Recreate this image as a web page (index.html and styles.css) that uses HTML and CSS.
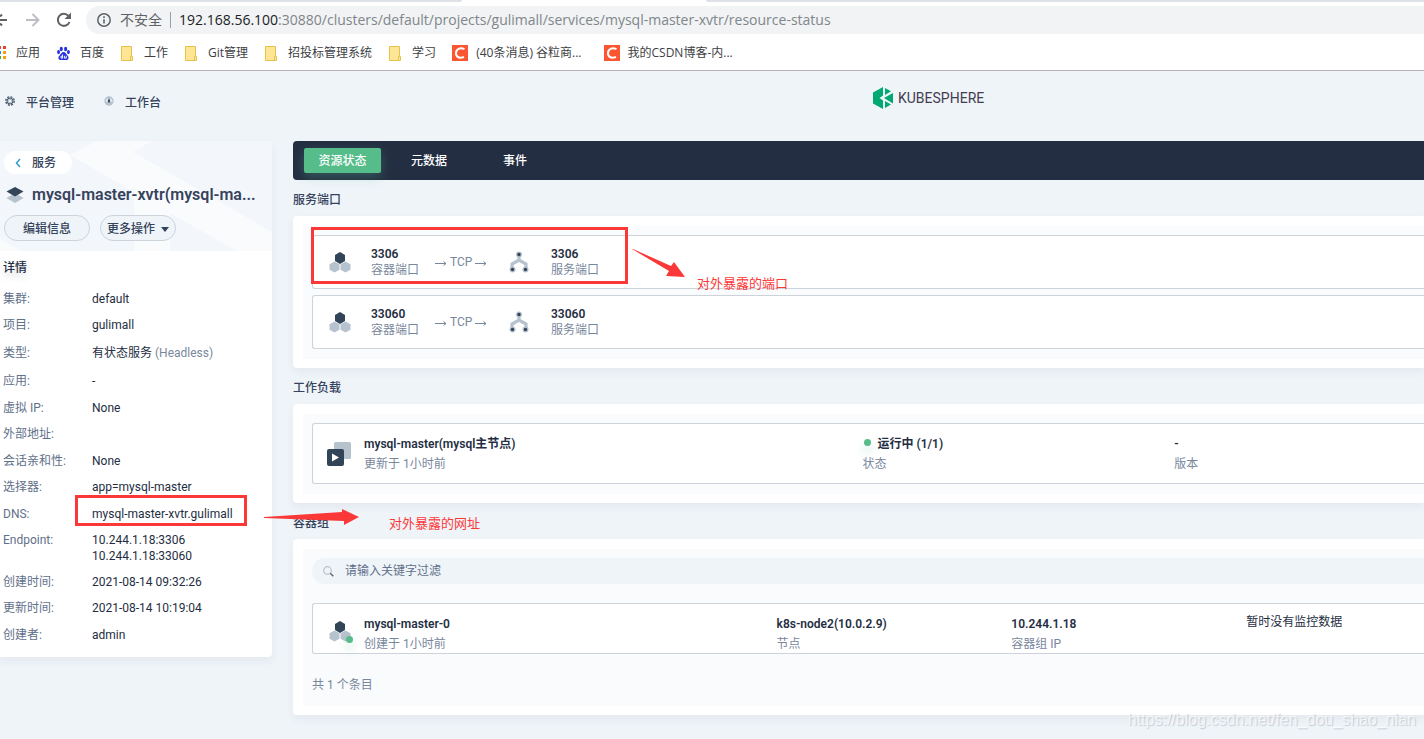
FILE: index.html
```html
<!DOCTYPE html>
<html lang="zh-CN">
<head>
<meta charset="utf-8">
<title>mysql-master-xvtr</title>
<link rel="stylesheet" href="styles.css">
</head>
<body>
<svg class="sprite" aria-hidden="true">
  <symbol id="pods" viewBox="0 0 22 22">
    <path fill="#324558" d="M11 1l5 3v6l-5 3-5-3V4z"/>
    <path fill="#b6c2cd" d="M5.500 10.500l5 2.800v5.400l-5 2.800-5-2.800v-5.400zM16.500 10.500l5 2.800v5.400l-5 2.800-5-2.800v-5.400z"/>
  </symbol>
  <symbol id="net" viewBox="0 0 20 22">
    <path fill="none" stroke="#b6c2cd" stroke-width="3.200" d="M10 4v6M3 18v-5l7-4 7 4v5"/>
    <circle cx="10" cy="3.500" r="3" fill="#b6c2cd"/><circle cx="3.500" cy="18.500" r="3" fill="#b6c2cd"/><circle cx="16.500" cy="18.500" r="3" fill="#b6c2cd"/>
    <circle cx="10" cy="3.500" r="1.700" fill="#324558"/><circle cx="3.500" cy="18.500" r="1.700" fill="#324558"/><circle cx="16.500" cy="18.500" r="1.700" fill="#324558"/>
  </symbol>
  <symbol id="folder" viewBox="0 0 13 15">
    <path fill="#ffe694" stroke="#e8c14c" d="M.5.5h10v10h1v4H.5z"/><path fill="none" stroke="#e8c14c" d="M9.500 14v-3.500h1"/>
  </symbol>
  <symbol id="csdn" viewBox="0 0 16 16">
    <path fill="#fc5531" d="M0 0h16v16H0z"/><path fill="none" stroke="#fff" stroke-width="2" d="M12.500 4.200C8 2 4 4 4 8.200c0 4 4 5.500 8 3.600"/>
  </symbol>
  <symbol id="arrow" viewBox="0 0 12 8">
    <path fill="none" stroke="#79879c" d="M0 5.500h11M8.500 3.500l2.500 2-2.500 2"/>
  </symbol>
</svg>

<div class="browser">
  <div class="tabstrip"><span class="tab-left"></span><span class="tab-active"></span><span class="tab-right"></span></div>
  <div class="toolbar">
    <button class="tool back" aria-label="后退"><svg width="8" height="16" viewBox="0 0 8 16"><path fill="none" stroke="#5f6368" stroke-width="2" d="M0 8h7M0 4.500L2 2.500M0 11.500l2 2"/></svg></button>
    <button class="tool forward" aria-label="前进"><svg width="14" height="14" viewBox="0 0 14 14"><path fill="none" stroke="#bdbfc2" stroke-width="2" d="M0 7h12M6.500 1l6 6-6 6"/></svg></button>
    <button class="tool reload" aria-label="重新加载"><svg width="16" height="16" viewBox="0 0 16 16"><path fill="none" stroke="#5f6368" stroke-width="2" d="M13.500 10A6 6 0 1 1 12.500 4"/><path fill="#5f6368" d="M15 .5V7H8.500z"/></svg></button>
    <div class="address">
      <svg class="info" width="14" height="14" viewBox="0 0 14 14"><circle cx="7" cy="7" r="6.200" fill="none" stroke="#5f6368" stroke-width="1.500"/><path stroke="#5f6368" stroke-width="1.600" d="M7 6.200v4.400M7 3.300v1.600"/></svg>
      <span class="insecure">不安全</span>
      <span class="url"><b>192.168.56.100</b>:30880/clusters/default/projects/gulimall/services/mysql-master-xvtr/resource-status</span>
    </div>
  </div>
  <nav class="bookmarks">
    <a href="#" class="apps"><svg width="6" height="14" viewBox="0 0 6 14"><path fill="#1a8cf0" d="M0 5h1v3H0z"/><path fill="#34a853" d="M0 10h1v3H0z"/><path fill="#ea4335" d="M0 0h1v3H0zM3 0h3v3H3z"/><path fill="#fb9f0b" d="M3 5h3v3H3zM3 10h3v3H3z"/></svg>应用</a>
    <a href="#" class="baidu"><svg width="13" height="15" viewBox="0 0 14 15"><g fill="#2932e1"><ellipse cx="4.600" cy="2.600" rx="1.700" ry="2.400"/><ellipse cx="9.300" cy="2.600" rx="1.700" ry="2.400"/><ellipse cx="1.700" cy="6" rx="1.600" ry="2.200"/><ellipse cx="12.300" cy="6" rx="1.600" ry="2.200"/><path d="M7 6c2 0 2.500 2 4 3.300 2.500 2.200 1.500 5.200-1 5.200H4c-2.500 0-3.500-3-1-5.200C4.500 8 5 6 7 6z"/></g><path fill="none" stroke="#fff" d="M6 8.500v4H4.300v-2H6M8 10v2.500h2V10"/></svg>百度</a>
    <a href="#" class="folder"><svg width="13" height="15"><use href="#folder"/></svg>工作</a>
    <a href="#" class="folder"><svg width="13" height="15"><use href="#folder"/></svg>Git管理</a>
    <a href="#" class="folder"><svg width="13" height="15"><use href="#folder"/></svg>招投标管理系统</a>
    <a href="#" class="folder"><svg width="13" height="15"><use href="#folder"/></svg>学习</a>
    <a href="#" class="csdn"><svg width="16" height="16"><use href="#csdn"/></svg>(40条消息) 谷粒商...</a>
    <a href="#" class="csdn"><svg width="16" height="16"><use href="#csdn"/></svg>我的CSDN博客-内...</a>
  </nav>
</div>

<div class="page">
  <header class="topbar">
    <nav class="topnav">
      <a href="#"><svg width="10" height="10" viewBox="0 0 10 10"><circle cx="5" cy="5" r="4.200" fill="none" stroke="#4a5b6e" stroke-width="1.400" stroke-dasharray="2 1.300"/><circle cx="5" cy="5" r="3" fill="#b6c2cd" stroke="#4a5b6e"/><circle cx="5" cy="5" r="1.300" fill="#eff4f9"/></svg>平台管理</a>
      <a href="#" class="bench"><svg width="10" height="10" viewBox="0 0 10 10"><circle cx="5" cy="5" r="4.700" fill="#b6c2cd"/><path fill="#dde5ec" d="M1.500 6a3.500 4 0 0 1 7 0z"/><path fill="#324558" d="M5 1.500l1.200 4L5 7 3.800 5.500z"/></svg>工作台</a>
    </nav>
    <a href="#" class="logo"><svg width="20" height="22" viewBox="0 0 20 22"><path fill="#00a971" d="M10 0v8.500L6.500 11l3.500 2.500V22L0 16.500v-11zM12 1l6 3.200-6 3.800zM20 6v10.500l-9-5.500zM12 14l6 3.500-6 3.500z"/></svg>KUBESPHERE</a>
  </header>

  <div class="columns">
    <aside class="sidebar">
      <div class="summary">
        <svg class="pattern" viewBox="0 0 272 110" preserveAspectRatio="xMaxYMin slice" aria-hidden="true"><path fill="#fafbfd" d="M70 14L97 0h55l-19 11 139 80v19h-35l-67-38v38h-36V51zM0 98l22 12H0z"/></svg>
        <a href="#" class="crumb"><svg width="6" height="10" viewBox="0 0 6 10"><path fill="none" stroke="#329dce" stroke-width="1.500" d="M5 1L1.500 5 5 9"/></svg>服务</a>
        <h1><svg width="18" height="18" viewBox="0 0 18 18"><path fill="#b6c2cd" d="M9 7l8.500 5L9 17 .5 12z"/><path fill="#324558" d="M9 1l8.500 4.500L9 10.500.5 5.500z"/></svg><span>mysql-master-xvtr(mysql-ma...</span></h1>
        <div class="actions">
          <button class="pill edit">编辑信息</button>
          <button class="pill more">更多操作<svg width="8" height="5" viewBox="0 0 8 5"><path fill="#324558" d="M0 0h8L4 5z"/></svg></button>
        </div>
      </div>
      <div class="details">
        <h2>详情</h2>
        <dl>
          <div><dt>集群:</dt><dd>default</dd></div>
          <div><dt>项目:</dt><dd>gulimall</dd></div>
          <div class="tall"><dt>类型:</dt><dd>有状态服务 <span class="muted">(Headless)</span></dd></div>
          <div><dt>应用:</dt><dd>-</dd></div>
          <div><dt>虚拟 IP:</dt><dd>None</dd></div>
          <div><dt>外部地址:</dt><dd></dd></div>
          <div><dt>会话亲和性:</dt><dd>None</dd></div>
          <div><dt>选择器:</dt><dd>app=mysql-master</dd></div>
          <div><dt>DNS:</dt><dd>mysql-master-xvtr.gulimall</dd></div>
          <div class="multi"><dt>Endpoint:</dt><dd>10.244.1.18:3306<br>10.244.1.18:33060</dd></div>
          <div><dt>创建时间:</dt><dd>2021-08-14 09:32:26</dd></div>
          <div><dt>更新时间:</dt><dd>2021-08-14 10:19:04</dd></div>
          <div><dt>创建者:</dt><dd>admin</dd></div>
        </dl>
      </div>
    </aside>

    <main class="content">
      <nav class="tabs">
        <button class="tab current">资源状态</button>
        <button class="tab">元数据</button>
        <button class="tab">事件</button>
      </nav>

      <h2 class="section-title">服务端口</h2>
      <section class="card"><div class="panel">
        <div class="item port">
          <svg width="22" height="22"><use href="#pods"/></svg>
          <p class="pair"><strong>3306</strong><span>容器端口</span></p>
          <span class="protocol"><svg width="12" height="8"><use href="#arrow"/></svg>TCP<svg width="12" height="8"><use href="#arrow"/></svg></span>
          <svg width="20" height="22"><use href="#net"/></svg>
          <p class="pair"><strong>3306</strong><span>服务端口</span></p>
        </div>
        <div class="item port">
          <svg width="22" height="22"><use href="#pods"/></svg>
          <p class="pair"><strong>33060</strong><span>容器端口</span></p>
          <span class="protocol"><svg width="12" height="8"><use href="#arrow"/></svg>TCP<svg width="12" height="8"><use href="#arrow"/></svg></span>
          <svg width="20" height="22"><use href="#net"/></svg>
          <p class="pair"><strong>33060</strong><span>服务端口</span></p>
        </div>
      </div></section>

      <h2 class="section-title">工作负载</h2>
      <section class="card"><div class="panel">
        <div class="item workload">
          <div class="lead">
            <svg width="24" height="24" viewBox="0 0 24 24"><rect x="7" width="17" height="17" rx="1.500" fill="#b6c2cd"/><rect y="7" width="17" height="17" rx="2" fill="#324558"/><path fill="#fff" d="M5 11.500l7 4-7 4z"/></svg>
            <p class="pair wide"><strong>mysql-master(mysql主节点)</strong><span>更新于 1小时前</span></p>
          </div>
          <p class="pair wide"><strong><i class="dot"></i>运行中 (1/1)</strong><span>状态</span></p>
          <p class="pair wide"><strong>-</strong><span>版本</span></p>
        </div>
      </div></section>

      <h2 class="section-title">容器组</h2>
      <section class="card"><div class="panel">
        <label class="search"><svg width="11" height="11" viewBox="0 0 11 11"><circle cx="4.500" cy="4.500" r="3.800" fill="none" stroke="#b6c2cd" stroke-width="1.200"/><path stroke="#5b6b7c" stroke-width="1.500" d="M7.300 7.300l3 3"/></svg><input type="text" placeholder="请输入关键字过滤" aria-label="请输入关键字过滤"></label>
        <div class="item pod">
          <div class="lead">
            <span class="pod-icon"><svg width="22" height="22"><use href="#pods"/></svg><i class="dot"></i></span>
            <p class="pair wide"><strong>mysql-master-0</strong><span>创建于 1小时前</span></p>
          </div>
          <p class="pair wide"><strong>k8s-node2(10.0.2.9)</strong><span>节点</span></p>
          <p class="pair wide"><strong>10.244.1.18</strong><span>容器组 IP</span></p>
          <p class="no-data">暂时没有监控数据</p>
        </div>
        <p class="total">共 1 个条目</p>
      </div></section>
    </main>
  </div>

  <div class="mark frame port-frame"></div>
  <svg class="mark port-arrow" width="54" height="32" viewBox="0 0 54 32"><path fill="#fb3838" d="M0 1l1 0 38 17 3-4 11 15-19-1 3-5z"/></svg>
  <span class="mark note port-note">对外暴露的端口</span>
  <div class="mark frame dns-frame"></div>
  <svg class="mark dns-arrow" width="95" height="18" viewBox="0 0 95 18"><path fill="#fb3838" d="M0 9l78-5V1l17 8-15 8v-4L0 10z"/></svg>
  <span class="mark note dns-note">对外暴露的网址</span>
  <span class="mark watermark">https://blog.csdn.net/fen_dou_shao_nian</span>
</div>
</body>
</html>
```

FILE: styles.css
```css
* { box-sizing: border-box; }
body { margin: 0; min-height: 100vh; display: flex; flex-direction: column; overflow-x: hidden; background: #eff4f9; color: #242e42; font: 12px/16px Roboto, "Noto Sans CJK SC", sans-serif; }
h1, h2, p, dl, dd { margin: 0; }
a { color: inherit; text-decoration: none; }
button { border: 0; padding: 0; background: none; color: inherit; font: inherit; cursor: pointer; }
svg { display: block; flex: none; }
.sprite { position: absolute; width: 0; height: 0; }

.browser { background: #fff; border-bottom: 1px solid #b4b2b4; }
.tabstrip { display: flex; height: 2px; background: #fff; }
.tab-left { flex: 462; background: #dee1e6; border-radius: 0 0 4px 0; }
.tab-active { flex: 244; }
.tab-right { flex: 718; background: #dee1e6; border-radius: 0 0 0 4px; }
.toolbar { display: flex; align-items: center; height: 36px; }
.forward { margin-left: 18px; }
.reload { margin-left: 16px; }
.address { display: flex; flex: 1; align-items: center; height: 28px; margin-left: 14px; padding-left: 11px; border-radius: 14px 0 0 14px; background: #f1f3f4; font-family: "Open Sans", "Noto Sans CJK SC", sans-serif; font-size: 14px; line-height: 20px; color: #80868b; white-space: nowrap; }
.insecure { margin-left: 9px; padding-right: 8px; border-right: 1px solid #9aa0a6; line-height: 16px; color: #5f6368; }
.url { margin-left: 8px; }
.url b { font-weight: 400; color: #202124; }
.bookmarks { display: flex; align-items: center; height: 32px; padding-bottom: 2px; font-family: "Open Sans", "Noto Sans CJK SC", sans-serif; color: #3c4043; white-space: nowrap; }
.bookmarks a { display: flex; align-items: center; gap: 10px; }
.baidu, .folder { margin-left: 17px; }
.csdn { margin-left: 16px; }
.bookmarks .csdn { gap: 8px; }
.csdn + .csdn { margin-left: 22px; }

.page { position: relative; flex: 1; overflow: hidden; padding-bottom: 24px; }
.topbar { display: grid; grid-template-columns: 873fr 551fr; height: 70px; }
.topnav { display: flex; align-items: flex-start; gap: 30px; padding: 24px 0 0 5px; font-weight: 500; color: #36435c; }
.topnav a { display: flex; gap: 11px; }
.topnav svg { margin-top: 1px; }
.logo { display: flex; align-items: center; gap: 5px; align-self: start; margin-top: 16px; color: #443d4e; font-size: 14px; font-weight: 400; line-height: 22px; }

.columns { display: grid; grid-template-columns: 272px minmax(0, 1fr); gap: 21px; align-items: start; }
.sidebar { overflow: hidden; background: #fff; border-radius: 0 4px 4px 0; box-shadow: 0 4px 8px rgba(36, 46, 66, .06); }
.summary { position: relative; padding: 10px 4px; background: #f3f6fb; height: 110px; }
.pattern { position: absolute; inset: 0; width: 100%; height: 100%; }
.crumb { position: relative; display: inline-flex; align-items: center; gap: 11px; height: 23px; padding: 0 16px 0 11px; border-radius: 12px; background: #fff; color: #36435c; font-weight: 500; }
.summary h1 { position: relative; display: flex; align-items: center; gap: 8px; margin: 9px 4px 0 2px; color: #36435c; font-size: 16px; line-height: 24px; font-weight: 600; }
.summary h1 span { white-space: nowrap; }
.actions { position: relative; display: flex; gap: 10px; margin-top: 8px; }
.pill { display: flex; align-items: center; justify-content: center; height: 26px; padding-top: 2px; border: 1px solid #ccd3db; border-radius: 13px; background: #eff4f9; color: #36435c; font-weight: 500; }
.edit { width: 86px; }
.more { width: 76px; gap: 6px; }
.details { padding: 9px 4px 9px 3px; }
.details h2 { font-size: 12px; line-height: 16px; font-weight: 500; text-shadow: 0 4px 8px rgba(36, 46, 66, .2); }
.details dl { margin-top: 10px; }
.details dl div { display: grid; grid-template-columns: 89px 1fr; padding: 5px 0; }
.details dl div:nth-child(even) { padding-bottom: 6px; }
.details dl .tall { padding: 6px 0 7px; }
.details dl .multi:nth-child(even) { padding-bottom: 5px; }
.details dt { color: #5f708a; }
.muted { color: #79879c; }

.tabs { display: flex; align-items: center; gap: 30px; height: 39px; padding-left: 11px; border-radius: 4px 0 0 4px; background: #242e42; color: #fff; font-weight: 500; }
.tab { min-width: 36px; height: 25px; }
.tab + .tab + .tab { margin-left: 20px; }
.current { width: 77px; border-radius: 2px; background: #55bc8a; box-shadow: 0 4px 12px rgba(85, 188, 138, .3); }
.section-title { padding: 12px 0 8px; color: #36435c; font-size: 12px; line-height: 16px; font-weight: 500; }
.card { padding: 10px 0 9px 10px; border-radius: 4px 0 0 4px; background: #fff; box-shadow: 0 4px 8px rgba(36, 46, 66, .06); }
.panel { padding: 9px 0 10px 9px; background: #f9fbfd; }
.item { border: 1px solid #ccd3db; border-right: 0; border-radius: 3px 0 0 3px; background: #fff; }
.item + .item { margin-top: 6px; }
.port { display: flex; align-items: center; height: 54px; padding-left: 16px; }
.port > .pair { width: 64px; margin-left: 20px; }
.port > .pair:last-child { margin-left: 22px; }
.protocol { display: flex; align-items: center; gap: 3px; width: 74px; color: #79879c; }
.pair strong, .pair span { display: block; white-space: nowrap; }
.pair strong { color: #242e42; font-weight: 600; }
.pair span { color: #79879c; }
.wide strong, .wide span { line-height: 20px; }
.workload, .pod { display: grid; align-items: center; }
.workload { grid-template-columns: 550fr 312fr 250fr; height: 61px; }
.lead { display: flex; align-items: center; }
.workload .lead { gap: 13px; padding-left: 14px; }
.dot { display: inline-block; width: 7px; height: 7px; border-radius: 50%; background: #55bc8a; box-shadow: 0 6px 10px rgba(85, 188, 138, .35); }
.workload .dot { margin: 0 7px 4px 1px; vertical-align: middle; }
.search { display: flex; align-items: center; gap: 11px; height: 26px; padding-left: 11px; border-radius: 13px 0 0 13px; background: #eff4f9; }
.search input { flex: 1; border: 0; outline: 0; padding: 0; background: none; color: #242e42; font: inherit; }
.search input::placeholder { color: #5f708a; opacity: 1; }
.pod { grid-template-columns: 464fr 235fr 235fr 178fr; height: 51px; margin-top: 19px; padding-top: 10px; }
.pod .lead { align-items: flex-start; gap: 13px; padding-left: 16px; }
.pod-icon { position: relative; margin-top: 6px; }
.pod-icon .dot { position: absolute; right: -2px; bottom: -1px; }
.no-data { align-self: start; white-space: nowrap; }
.total { padding: 23px 0 3px; color: #79879c; }

.mark { position: absolute; pointer-events: none; }
.frame { border: 3px solid #fb3838; }
.note { color: #fb3838; font-size: 13px; line-height: 16px; white-space: nowrap; }
.port-frame { left: 311px; top: 156px; width: 317px; height: 57px; }
.port-arrow { left: 632px; top: 177px; }
.port-note { left: 697px; top: 205px; }
.dns-frame { left: 75px; top: 424px; width: 172px; height: 31px; }
.dns-arrow { left: 264px; top: 437px; }
.dns-note { left: 389px; top: 445px; }
.watermark { right: 8px; bottom: 8px; color: rgba(255, 255, 255, .7); font: 16px/22px "Liberation Sans", sans-serif; text-shadow: 1px 1px 1px rgba(120, 130, 145, .35); }
```
